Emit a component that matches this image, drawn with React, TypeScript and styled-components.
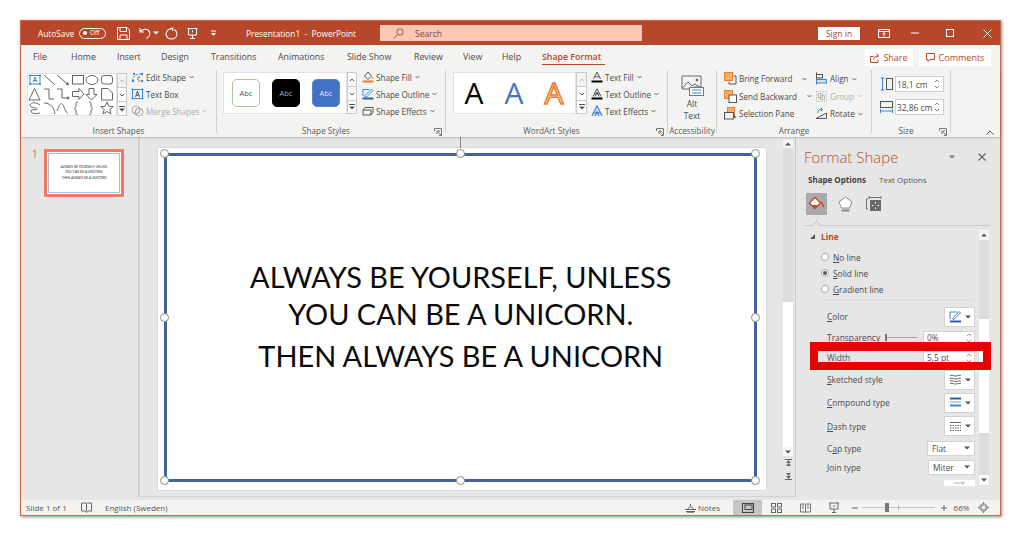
import React from "react";
import styled, { createGlobalStyle } from "styled-components";

const ACCENT = "#b7472a";
const INK = "#4a4a4a";
const BLUE = "#3f86cf";
const ORANGE = "#ed7d31";

const Global = createGlobalStyle`
  html, body { margin: 0; padding: 0; background: #fff; }
  body { font-family: "Open Sans", "Liberation Sans", sans-serif; }
  * { box-sizing: border-box; }
  svg { display: block; flex: none; }
`;

const Page = styled.div`
  width: 1024px;
  height: 538px;
  padding: 20px 0 0 20px;
  overflow: hidden;
`;
const Win = styled.div`
  width: 981px;
  height: 496px;
  border: 1px solid #c9674d;
  box-shadow: 1px 1px 3px rgba(0, 0, 0, 0.45);
  display: flex;
  flex-direction: column;
  background: #e6e6e6;
  position: relative;
`;

/* ---------- title bar ---------- */
const TitleBar = styled.div`
  height: 24px;
  flex: none;
  background: ${ACCENT};
  color: #fff;
  display: flex;
  align-items: center;
  padding-left: 17px;
  font-size: 8.3px;
`;
const Slot = styled.div<{ $w: number; $ml?: number }>`
  width: ${(p) => p.$w}px;
  margin-left: ${(p) => p.$ml ?? 0}px;
  flex: none;
  display: flex;
  align-items: center;
  white-space: nowrap;
`;
const Toggle = styled.div`
  width: 27px;
  height: 11px;
  border: 1px solid #fff;
  border-radius: 6px;
  display: flex;
  align-items: center;
  padding-left: 3px;
  gap: 3px;
  font-size: 6.5px;
  line-height: 1;
`;
const ToggleDot = styled.span`
  width: 4px;
  height: 4px;
  border-radius: 50%;
  background: #fff;
`;
const Search = styled.div`
  width: 262px;
  height: 16px;
  margin-left: 26px;
  flex: none;
  background: #fdc7b3;
  color: #7a4a3a;
  display: flex;
  align-items: center;
  padding-left: 13px;
  gap: 11px;
  font-size: 8.5px;
`;
const SignIn = styled.div`
  width: 42px;
  height: 13px;
  margin-left: 176px;
  flex: none;
  background: #fff;
  color: ${ACCENT};
  font-size: 8.5px;
  display: flex;
  align-items: center;
  justify-content: center;
`;

/* ---------- tabs ---------- */
const TabsRow = styled.div`
  height: 25px;
  flex: none;
  background: #f3f3f2;
  display: flex;
  align-items: center;
  padding: 0 9px 0 12px;
  font-size: 8.8px;
  color: ${INK};
`;
const Tab = styled.div<{ $w: number; $active?: boolean }>`
  width: ${(p) => p.$w}px;
  flex: none;
  white-space: nowrap;
  height: 25px;
  line-height: 24px;
  position: relative;
  color: ${(p) => (p.$active ? ACCENT : INK)};
  font-weight: ${(p) => (p.$active ? 600 : 400)};
  ${(p) =>
    p.$active &&
    `&::after { content: ""; position: absolute; left: 0; bottom: 5px; width: 63px; height: 1.5px; background: ${ACCENT}; }`}
`;
const TopAction = styled.div<{ $w: number; $ml?: string }>`
  width: ${(p) => p.$w}px;
  margin-left: ${(p) => p.$ml ?? "0"};
  height: 17px;
  flex: none;
  background: #fff;
  color: ${ACCENT};
  font-size: 9px;
  display: flex;
  align-items: center;
  justify-content: center;
  gap: 4px;
`;

/* ---------- ribbon ---------- */
const Ribbon = styled.div`
  height: 67px;
  flex: none;
  background: #f3f3f2;
  display: flex;
  align-items: flex-start;
  position: relative;
  box-shadow: 0 1px 2px rgba(0, 0, 0, 0.2);
  z-index: 2;
  color: ${INK};
  font-size: 8.1px;
`;
const Group = styled.div<{ $w: number; $noEdge?: boolean }>`
  width: ${(p) => p.$w}px;
  height: 63px;
  flex: none;
  border-right: 1px solid ${(p) => (p.$noEdge ? "transparent" : "#cfcfcf")};
  display: flex;
  flex-direction: column;
  position: relative;
`;
const GroupBody = styled.div<{ $pl?: number }>`
  height: 55px;
  flex: none;
  display: flex;
  align-items: flex-start;
  padding-left: ${(p) => p.$pl ?? 0}px;
`;
const GroupLabel = styled.div<{ $launcher?: boolean }>`
  height: 12px;
  line-height: 12px;
  flex: none;
  text-align: center;
  font-size: 8.2px;
  color: #5a5a5a;
  white-space: nowrap;
  padding-right: ${(p) => (p.$launcher ? 10 : 0)}px;
`;
const Launcher = styled.div`
  position: absolute;
  right: 3px;
  bottom: -3px;
`;
const Collapse = styled.div`
  position: absolute;
  right: 6px;
  bottom: 2px;
`;
const Gallery = styled.div<{ $w: number; $h: number; $mt: number }>`
  width: ${(p) => p.$w}px;
  height: ${(p) => p.$h}px;
  margin-top: ${(p) => p.$mt}px;
  flex: none;
  background: #fff;
  border: 1px solid #e2e2e2;
  display: flex;
  align-items: center;
  position: relative;
`;
const ScrollStack = styled.div<{ $w: number; $mt: number }>`
  width: ${(p) => p.$w}px;
  margin-top: ${(p) => p.$mt}px;
  flex: none;
  display: flex;
  flex-direction: column;
`;
const ScrollBtn = styled.div<{ $h: number; $faded?: boolean }>`
  height: ${(p) => p.$h}px;
  border: 1px solid #c9c9c9;
  margin-top: -1px;
  background: ${(p) => (p.$faded ? "#f3f3f2" : "#fdfdfd")};
  display: flex;
  align-items: center;
  justify-content: center;
  &:first-child { margin-top: 0; }
`;
const Menu = styled.div<{ $ml: number; $w?: number; $gap?: number; $pt?: number }>`
  margin-left: ${(p) => p.$ml}px;
  ${(p) => (p.$w ? `width: ${p.$w}px;` : "")}
  flex: none;
  display: flex;
  flex-direction: column;
  gap: ${(p) => p.$gap ?? 3}px;
  padding-top: ${(p) => p.$pt ?? 0}px;
`;
const MenuItem = styled.div<{ $off?: boolean; $h?: number }>`
  height: ${(p) => p.$h ?? 14}px;
  display: flex;
  align-items: center;
  gap: 2px;
  white-space: nowrap;
  color: ${(p) => (p.$off ? "#aeaeae" : INK)};
`;
const CaretBox = styled.span<{ $ml?: number }>`
  margin-left: ${(p) => p.$ml ?? 1}px;
`;
const Swatch = styled.div<{ $bg: string; $line: string; $fg: string; $ml: number }>`
  width: 28px;
  height: 28px;
  margin-left: ${(p) => p.$ml}px;
  flex: none;
  border-radius: 5px;
  background: ${(p) => p.$bg};
  border: 1.5px solid ${(p) => p.$line};
  color: ${(p) => p.$fg};
  font-size: 7.5px;
  display: flex;
  align-items: center;
  justify-content: center;
`;
const BigA = styled.div<{ $ml: number; $color: string; $stroke?: string }>`
  width: 20px;
  margin-left: ${(p) => p.$ml}px;
  flex: none;
  text-align: center;
  font-size: 30px;
  line-height: 1;
  color: ${(p) => p.$color};
  ${(p) => (p.$stroke ? `-webkit-text-stroke: 1.5px ${p.$stroke};` : "")}
`;
const AltColumn = styled.div`
  width: 100%;
  display: flex;
  flex-direction: column;
  align-items: center;
  padding-top: 5px;
  font-size: 8.4px;
  line-height: 12px;
`;
const AltLabel = styled.div`
  margin-top: 2px;
  text-align: center;
`;
const SizeColumn = styled.div`
  padding-top: 6px;
  display: flex;
  flex-direction: column;
  gap: 7px;
`;
const SizeRow = styled.div`
  display: flex;
  align-items: center;
  gap: 2px;
`;
const SizeInput = styled.div`
  width: 49px;
  height: 16px;
  background: #fff;
  border: 1px solid #cfcfcf;
  padding-left: 1px;
  font-size: 8.4px;
  display: flex;
  align-items: center;
  justify-content: space-between;
  padding-right: 3px;
`;
const Spin = styled.div`
  display: flex;
  flex-direction: column;
  gap: 2px;
`;

/* ---------- body ---------- */
const Body = styled.div`
  flex: 1;
  min-height: 0;
  display: flex;
`;
const Thumbs = styled.div`
  width: 118px;
  flex: none;
  border-right: 1px solid #c9c9c9;
  height: 360px;
  display: flex;
  align-items: flex-start;
  padding: 12px 0 0 11px;
`;
const ThumbNum = styled.div`
  width: 12px;
  font-size: 10px;
  line-height: 11px;
  color: #d9674e;
`;
const Thumb = styled.div`
  width: 80px;
  height: 48px;
  flex: none;
  border: 3px solid #ef7d64;
  background: #fff;
  padding: 1px;
`;
const ThumbInner = styled.div`
  height: 100%;
  border: 1px solid #a9bddb;
  display: flex;
  flex-direction: column;
  justify-content: center;
  align-items: center;
  gap: 2.4px;
  font-size: 3.2px;
  line-height: 3.2px;
  color: #333;
  white-space: nowrap;
  font-family: Lato, sans-serif;
`;
const Editor = styled.div`
  width: 656px;
  height: 360px;
  flex: none;
  border-left: 1px solid #d6d6d6;
  border-bottom: 1px solid #d2d2d2;
  display: flex;
  align-items: flex-start;
  padding: 11px 0 0 18px;
`;
const Slide = styled.div`
  width: 608px;
  height: 342px;
  flex: none;
  background: #fff;
  box-shadow: 0 0 0 1px #dadada;
  padding: 4.5px 9px 8.5px 5.5px;
  position: relative;
`;
const RotLine = styled.div`
  position: absolute;
  left: 302px;
  top: -11px;
  width: 1px;
  height: 11px;
  background: #8a8a8a;
`;
const Shape = styled.div`
  width: 100%;
  height: 100%;
  border: 3.5px solid #44629c;
  display: flex;
  flex-direction: column;
  align-items: center;
  justify-content: center;
  position: relative;
  padding: 0 0 2px 1px;
  color: #0a0a0a;
  font-family: Lato, "Open Sans", sans-serif;
  font-size: 28.9px;
  line-height: 37px;
  white-space: nowrap;
`;
const ShapeLine = styled.div<{ $mt?: number }>`
  margin-top: ${(p) => p.$mt ?? 0}px;
`;
const HandleLayer = styled.div`
  position: absolute;
  inset: -1.75px;
`;
const Handle = styled.div<{ $l: number; $t: number }>`
  position: absolute;
  left: ${(p) => p.$l}%;
  top: ${(p) => p.$t}%;
  width: 9px;
  height: 9px;
  margin: -4.5px 0 0 -4.5px;
  background: #fff;
  border: 1.3px solid #8c8c8c;
  border-radius: 50%;
`;
const VScroll = styled.div`
  width: 10px;
  margin: -8px 0 0 17px;
  flex: none;
  display: flex;
  flex-direction: column;
  height: 342px;
`;
const VBtn = styled.div<{ $h: number }>`
  height: ${(p) => p.$h}px;
  flex: none;
  background: #f7f7f7;
  display: flex;
  align-items: center;
  justify-content: center;
`;
const VTrack = styled.div<{ $thumb: number; $align: string; $pad?: number }>`
  flex: 1;
  min-height: 0;
  background: #dcdcdc;
  display: flex;
  flex-direction: column;
  justify-content: ${(p) => p.$align};
  padding-top: ${(p) => p.$pad ?? 0}px;
  &::before {
    content: "";
    display: block;
    height: ${(p) => p.$thumb}px;
    background: #fff;
  }
`;
const NavBtn = styled.div`
  height: 12px;
  flex: none;
  margin-top: 1px;
  display: flex;
  align-items: center;
  justify-content: center;
`;

/* ---------- format pane ---------- */
const Pane = styled.div`
  width: 205px;
  flex: none;
  height: 360px;
  border-left: 1px solid #c9c9c9;
  padding-left: 8px;
  color: ${INK};
  font-size: 8.4px;
`;
const PaneHead = styled.div`
  height: 20px;
  margin-top: 10px;
  display: flex;
  align-items: center;
`;
const PaneTitle = styled.div`
  width: 145px;
  font-size: 15px;
  font-weight: 300;
  color: #c2492c;
  white-space: nowrap;
`;
const PaneClose = styled.div`
  margin-left: 23px;
`;
const PaneTabs = styled.div`
  height: 14px;
  margin-top: 6px;
  padding-left: 4px;
  display: flex;
  align-items: center;
  line-height: 14px;
  font-size: 8px;
`;
const PaneTab = styled.div<{ $bold?: boolean; $w: number }>`
  width: ${(p) => p.$w}px;
  font-weight: ${(p) => (p.$bold ? 700 : 400)};
  color: ${(p) => (p.$bold ? "#3f3f3f" : "#555")};
  white-space: nowrap;
`;
const PaneIcons = styled.div`
  margin-top: 6px;
  height: 22px;
  padding-left: 2px;
  display: flex;
  align-items: center;
`;
const PaneIconBox = styled.div<{ $on?: boolean; $w: number; $ml?: number }>`
  width: ${(p) => p.$w}px;
  margin-left: ${(p) => p.$ml ?? 0}px;
  height: 22px;
  background: ${(p) => (p.$on ? "#a9a9a9" : "transparent")};
  display: flex;
  align-items: center;
  justify-content: center;
`;
const PaneRule = styled.div`
  width: 186px;
  height: 1px;
  margin-top: 10px;
  background: #c9c9c9;
  position: relative;
  &::after {
    content: "";
    position: absolute;
    left: 9px;
    top: -3px;
    width: 6px;
    height: 6px;
    background: #e6e6e6;
    border-left: 1px solid #c9c9c9;
    border-top: 1px solid #c9c9c9;
    transform: rotate(45deg);
  }
`;
const PaneScrollArea = styled.div`
  margin-top: 4px;
  height: 255px;
  display: flex;
`;
const PaneMain = styled.div`
  width: 175px;
  flex: none;
`;
const SectionHead = styled.div`
  height: 12px;
  padding-left: 6px;
  display: flex;
  align-items: center;
  gap: 6px;
  font-weight: 700;
  color: ${ACCENT};
`;
const RadioList = styled.div`
  margin-top: 7px;
  padding-left: 17px;
  display: flex;
  flex-direction: column;
`;
const RadioRow = styled.div`
  height: 16px;
  display: flex;
  align-items: center;
  gap: 4px;
`;
const RadioDot = styled.span<{ $on?: boolean }>`
  width: 8px;
  height: 8px;
  border-radius: 50%;
  background: #fff;
  border: 1px solid #a8a8a8;
  display: flex;
  align-items: center;
  justify-content: center;
  &::after {
    content: "";
    width: 4px;
    height: 4px;
    border-radius: 50%;
    background: ${(p) => (p.$on ? "#555" : "transparent")};
  }
`;
const ThinRule = styled.div`
  margin: 2px 4px 6px 16px;
  height: 1px;
  background: #dcdcdc;
`;
const PropRow = styled.div<{ $h: number }>`
  height: ${(p) => p.$h}px;
  padding: 0 4px 0 23px;
  display: flex;
  align-items: center;
  justify-content: space-between;
  position: relative;
`;
const DropBtn = styled.div`
  width: 31px;
  height: 20px;
  background: #fff;
  border: 1px solid #d2d2d2;
  display: flex;
  align-items: center;
  justify-content: center;
  gap: 3px;
`;
const SelectBox = styled.div<{ $w: number }>`
  width: ${(p) => p.$w}px;
  height: 15px;
  background: #fff;
  border: 1px solid #d2d2d2;
  display: flex;
  align-items: center;
  justify-content: space-between;
  padding: 0 4px 0 4px;
`;
const NumInput = styled.div<{ $peach?: boolean }>`
  width: 52px;
  height: 14px;
  background: #fff;
  border: 1px solid ${(p) => (p.$peach ? "#f5cdbd" : "#d2d2d2")};
  display: flex;
  align-items: center;
  justify-content: space-between;
  padding: 0 2px 0 3px;
`;
const SliderWrap = styled.div`
  display: flex;
  align-items: center;
  gap: 5px;
`;
const MiniSlider = styled.div`
  width: 33px;
  height: 1px;
  background: #a8a8a8;
  position: relative;
  &::before {
    content: "";
    position: absolute;
    left: 0;
    top: -3px;
    width: 1.5px;
    height: 7px;
    background: #777;
  }
`;
const Callout = styled.div`
  position: absolute;
  left: 6px;
  right: -12px;
  top: -6px;
  bottom: -3px;
  border-style: solid;
  border-color: #e60000;
  border-width: 9px 8px 8px 8px;
  z-index: 5;
`;
const PartialBtn = styled.div`
  width: 31px;
  height: 6px;
  margin: 3px 0 0 140px;
  background: #fff;
  display: flex;
  justify-content: center;
  overflow: hidden;
`;
const PaneVScroll = styled.div`
  width: 10px;
  flex: none;
  display: flex;
  flex-direction: column;
`;

/* ---------- status bar ---------- */
const StatusBar = styled.div`
  height: 15px;
  flex: none;
  background: #f3f3f2;
  display: flex;
  align-items: center;
  padding-left: 5px;
  color: #555;
  font-size: 8px;
`;
const StatusRight = styled.div`
  margin-left: auto;
  display: flex;
  align-items: center;
  height: 15px;
  padding-right: 4px;
`;
const StatusSlot = styled.div<{ $w: number; $on?: boolean; $start?: boolean }>`
  width: ${(p) => p.$w}px;
  height: 15px;
  flex: none;
  display: flex;
  align-items: center;
  justify-content: ${(p) => (p.$start ? "flex-start" : "center")};
  gap: 2px;
  background: ${(p) => (p.$on ? "#c6c6c6" : "transparent")};
`;
const ZoomTrack = styled.div`
  width: 73px;
  height: 1px;
  flex: none;
  background: #c4c4c4;
  position: relative;
`;
const ZoomThumb = styled.div`
  position: absolute;
  left: 23px;
  top: -4px;
  width: 4px;
  height: 9px;
  background: #777;
`;
const ZoomTick = styled.div`
  position: absolute;
  left: 36px;
  top: -2px;
  width: 1px;
  height: 5px;
  background: #b4b4b4;
`;

/* ---------- drawings ---------- */
type IP = { w?: number; h?: number; vb?: string; c?: string; sw?: number; children?: React.ReactNode };
const Ic = ({ w = 12, h = 12, vb, c = "currentColor", sw = 1, children }: IP) => (
  <svg width={w} height={h} viewBox={vb ?? `0 0 ${w} ${h}`} fill="none" stroke={c} strokeWidth={sw}>
    {children}
  </svg>
);
const Caret = ({ c = "#666" }: { c?: string }) => (
  <Ic w={5} h={4} c={c}><path d="M.5 1 2.500 3 4.500 1" /></Ic>
);
const Solid = ({ dir = "down", c = "#555" }: { dir?: "up" | "down"; c?: string }) => (
  <svg width="6" height="4" viewBox="0 0 6 4"><path d={dir === "down" ? "M0 .5h6L3 3.500z" : "M0 3.500h6L3 .5z"} fill={c} /></svg>
);
const Chev = ({ dir, c = "#555" }: { dir: "up" | "down"; c?: string }) => (
  <Ic w={6} h={4} c={c}><path d={dir === "down" ? "M.8 .8 3 3 5.200 .8" : "M.8 3.200 3 1 5.200 3.200"} /></Ic>
);
const More = () => (
  <svg width="6" height="6" viewBox="0 0 6 6"><path d="M0 .5h6" stroke="#555" /><path d="M0 2.500h6L3 5.500z" fill="#555" /></svg>
);
const LauncherIcon = () => (
  <Ic w={8} h={8} c="#777"><path d="M.5 3V.5H7.500V7.500H5M7 7 3.500 3.500M3 6V3H6" /></Ic>
);

const ShapesArt = () => (
  <Ic w={87} h={41} vb="1 1 87 41" c="#666">
    <rect x="3" y="2.500" width="10" height="8.500" stroke={BLUE} />
    <path d="M6 9 8 4l2 5M6.700 7.500h2.600" stroke={BLUE} />
    <g fill={BLUE} stroke="none"><circle cx="3" cy="2.500" r="1" /><circle cx="13" cy="2.500" r="1" /><circle cx="3" cy="11" r="1" /><circle cx="13" cy="11" r="1" /></g>
    <path d="M17 2 28 12M30 2l11 9.500" /><path d="m39 11 2.500 1-1-2.500z" fill="#555" />
    <rect x="45.500" y="2.500" width="11" height="8.500" /><ellipse cx="65" cy="7" rx="6" ry="4.500" /><rect x="74.500" y="2.500" width="11" height="8.500" rx="2.500" />
    <path d="M2 27 7.500 15.500 13 27zM17 16h5v10h5M30 16h5v9h5" /><circle cx="41" cy="25" r="1" fill="#555" />
    <path d="M45.500 18.500h6.500V15.500l5 5.500-5 5.500v-3h-6.500zM62 15.500h5v6h3l-5.500 5.500L59 21.500h3zM74.500 27V15.500H81l4.500 4.500V27z" />
    <path d="M13 32c-4-3-9-3-10 0s7 2 7 4-6-1-6 2 5 3 9 2M17 30c6 0 10 4 11 11M30 38c3-9 5-9 7-4s3 6 4 7" />
    <path d="M51 29c-2 0-2 1-2 3s0 3-2 3.500c2 .5 2 1.500 2 3.500s0 3 2 3M62 29c2 0 2 1 2 3s0 3 2 3.500c-2 .5-2 1.500-2 3.500s0 3-2 3" />
    <path d="M80 29l1.800 4.300 4.500.3-3.500 2.900 1.200 4.500-4-2.500-4 2.500 1.200-4.500-3.500-2.900 4.500-.3z" />
  </Ic>
);

const handles: [number, number][] = [[0, 0], [50, 0], [100, 0], [0, 50], [100, 50], [0, 100], [50, 100], [100, 100]];
const U = ({ children }: { children: React.ReactNode }) => <u>{children}</u>;

export default function App() {
  return (
    <Page>
      <Global />
      <Win>
        <TitleBar>
          <Slot $w={41}>AutoSave</Slot>
          <Toggle><ToggleDot />Off</Toggle>
          <Slot $w={13} $ml={11}>
            <Ic w={13} h={13}><path d="M.5.500h9.500l2.500 2.500v9.500H.5z" /><path d="M3 .5v4h6.500v-4M3 12.500V8h7v4.500" /></Ic>
          </Slot>
          <Slot $w={17} $ml={9}>
            <Ic w={12} h={12} sw={1.100}><path d="M1 1v4h4M1.300 5C3 1.500 9 1 10.500 5c1 3-1 5.500-3.500 6.500" /></Ic>
            <CaretBox $ml={2}><Solid c="#fff" /></CaretBox>
          </Slot>
          <Slot $w={13} $ml={9}>
            <Ic w={13} h={13} sw={1.100}><path d="M5 1.500 8 1.200 7.500 4M7.500 1.500C3 1.500 1 4.500 1 7c0 3 2.500 5 5.500 5s5.500-2 5.500-5c0-2-1-3.500-2.500-4.500" /></Ic>
          </Slot>
          <Slot $w={11} $ml={9}>
            <Ic w={11} h={13}><path d="M.5 1.500h10M1.500 1.500v6.500h8V1.500M5.500 8v3M3 11.500h5M5.500 3.500v2" /></Ic>
          </Slot>
          <Slot $w={7} $ml={12}>
            <svg width="7" height="7" viewBox="0 0 7 7"><path d="M1 1h5" stroke="#fff" /><path d="M1 3h5L3.500 6z" fill="#fff" /></svg>
          </Slot>
          <Slot $w={108} $ml={29}>Presentation1&nbsp; -&nbsp; PowerPoint</Slot>
          <Search>
            <Ic w={11} h={11} c="#8a5a48"><circle cx="7" cy="4" r="3.200" /><path d="M4.800 6.300 1 10.300" /></Ic>
            Search
          </Search>
          <SignIn>Sign in</SignIn>
          <Slot $w={13} $ml={18}>
            <Ic w={12} h={9}><path d="M.5.500h11v8H.5z" /><path d="M.5 2.500h11" /><path d="M6 7.500V3.800M4.300 5.300 6 3.600 7.700 5.300" /></Ic>
          </Slot>
          <Slot $w={8} $ml={20}><Ic w={8} h={2}><path d="M0 1h8" /></Ic></Slot>
          <Slot $w={8} $ml={27}><Ic w={8} h={8}><rect x=".5" y=".5" width="7" height="7" /></Ic></Slot>
          <Slot $w={9} $ml={29}><Ic w={9} h={9}><path d="M.5.500l8 8M8.500.500l-8 8" /></Ic></Slot>
        </TitleBar>

        <TabsRow>
          <Tab $w={38}>File</Tab>
          <Tab $w={46}>Home</Tab>
          <Tab $w={44}>Insert</Tab>
          <Tab $w={50}>Design</Tab>
          <Tab $w={67}>Transitions</Tab>
          <Tab $w={69}>Animations</Tab>
          <Tab $w={67}>Slide Show</Tab>
          <Tab $w={49}>Review</Tab>
          <Tab $w={39}>View</Tab>
          <Tab $w={40}>Help</Tab>
          <Tab $w={63} $active>Shape Format</Tab>
          <TopAction $w={48} $ml="auto">
            <Ic w={9} h={10}><path d="M.5 3.500h3M.5 3.500v6h7.500v-3M3.500 6.500C4 4 5.500 3 8 3M6.500.5 8.500 3 6.500 5" /></Ic>
            Share
          </TopAction>
          <TopAction $w={72} $ml="6px">
            <Ic w={9} h={9}><path d="M.5.500h8v6H4L2 8.500v-2H.5z" /></Ic>
            Comments
          </TopAction>
        </TabsRow>

        <Ribbon>
          <Group $w={196}>
            <GroupBody $pl={6}>
              <Gallery $w={90} $h={43} $mt={3}><ShapesArt /></Gallery>
              <ScrollStack $w={10} $mt={3}>
                <ScrollBtn $h={15} $faded><Chev dir="up" c="#bbb" /></ScrollBtn>
                <ScrollBtn $h={15}><Chev dir="down" /></ScrollBtn>
                <ScrollBtn $h={15}><More /></ScrollBtn>
              </ScrollStack>
              <Menu $ml={4}>
                <MenuItem>
                  <Ic w={13} h={12} c="#555"><path d="M2 10c0-5 2-7 9-7" strokeDasharray="2 1.500" stroke={BLUE} /><path d="M9 6c-2 0-3 1-2 2.500s2 .5 1 2" /><g fill={BLUE} stroke="none"><circle cx="2" cy="10" r="1.200" /><circle cx="11" cy="3" r="1.200" /><circle cx="11" cy="10" r="1.200" /><circle cx="3" cy="3" r="1.200" /></g></Ic>
                  Edit Shape<CaretBox><Caret /></CaretBox>
                </MenuItem>
                <MenuItem>
                  <Ic w={13} h={12} c={BLUE}><rect x="1.500" y="1.500" width="10" height="9" /><path d="M4.500 9 6.500 3l2 6M5.200 7.300h2.600" stroke="#555" /><g fill={BLUE} stroke="none"><circle cx="1.500" cy="1.500" r="1" /><circle cx="11.500" cy="1.500" r="1" /><circle cx="1.500" cy="10.500" r="1" /><circle cx="11.500" cy="10.500" r="1" /></g></Ic>
                  Text Box
                </MenuItem>
                <MenuItem $off>
                  <Ic w={13} h={12} c="#aeaeae"><circle cx="5" cy="5" r="4" /><circle cx="8" cy="7" r="4" /><path d="M3 8l5-6M5 10l5-6" /></Ic>
                  Merge Shapes<CaretBox><Caret c="#bbb" /></CaretBox>
                </MenuItem>
              </Menu>
            </GroupBody>
            <GroupLabel>Insert Shapes</GroupLabel>
          </Group>

          <Group $w={229}>
            <GroupBody $pl={6}>
              <Gallery $w={124} $h={42} $mt={2}>
                <Swatch $bg="#fff" $line="#a9c98f" $fg="#44546a" $ml={8}>Abc</Swatch>
                <Swatch $bg="#000" $line="#000" $fg="#9fb0d0" $ml={12}>Abc</Swatch>
                <Swatch $bg="#4472c4" $line="#5b84cf" $fg="#dfe8f6" $ml={12}>Abc</Swatch>
              </Gallery>
              <ScrollStack $w={10} $mt={2}>
                <ScrollBtn $h={15}><Chev dir="up" /></ScrollBtn>
                <ScrollBtn $h={15}><Chev dir="down" /></ScrollBtn>
                <ScrollBtn $h={14}><More /></ScrollBtn>
              </ScrollStack>
              <Menu $ml={5}>
                <MenuItem>
                  <Ic w={12} h={12} c="#555"><path d="M6 1 2.500 5 6 8.500 9.500 5z" /><path d="M10.500 6.500v1" /><path d="M.5 10.500h11" stroke={ORANGE} strokeWidth={2} /></Ic>
                  Shape Fill<CaretBox><Caret /></CaretBox>
                </MenuItem>
                <MenuItem>
                  <Ic w={12} h={12} c="#555"><path d="M1 8V1.500h6M3 7.500 9.500 1l1.500 1.500L4.500 9H3z" stroke={BLUE} /><path d="M.5 10.500h11" stroke="#2f5fa8" strokeWidth={2} /></Ic>
                  Shape Outline<CaretBox><Caret /></CaretBox>
                </MenuItem>
                <MenuItem>
                  <Ic w={12} h={12} c="#555"><path d="M3 2.500h8v5l-2 2.500H1V5z" /><path d="M1 5h8v5" /></Ic>
                  Shape Effects<CaretBox><Caret /></CaretBox>
                </MenuItem>
              </Menu>
            </GroupBody>
            <GroupLabel $launcher>Shape Styles</GroupLabel>
            <Launcher><LauncherIcon /></Launcher>
          </Group>

          <Group $w={222}>
            <GroupBody $pl={7}>
              <Gallery $w={123} $h={42} $mt={2}>
                <BigA $ml={10} $color="#000">A</BigA>
                <BigA $ml={20} $color="#4472c4">A</BigA>
                <BigA $ml={20} $color="#fbe5d6" $stroke={ORANGE}>A</BigA>
              </Gallery>
              <ScrollStack $w={11} $mt={2}>
                <ScrollBtn $h={15} $faded><Chev dir="up" c="#bbb" /></ScrollBtn>
                <ScrollBtn $h={15}><Chev dir="down" /></ScrollBtn>
                <ScrollBtn $h={14}><More /></ScrollBtn>
              </ScrollStack>
              <Menu $ml={4}>
                <MenuItem>
                  <Ic w={12} h={12} c="#555"><path d="M2.500 8 6 1l3.500 7M3.800 5.800h4.400" /><path d="M.5 10.500h11" stroke="#000" strokeWidth={2} /></Ic>
                  Text Fill<CaretBox><Caret /></CaretBox>
                </MenuItem>
                <MenuItem>
                  <Ic w={12} h={12} c="#555"><path d="M2 8.500 6 .8l4 7.700M3.800 6h4.400M4 8.500 6 4l2 4.500" /><path d="M.5 10.500h11" stroke="#000" strokeWidth={2} /></Ic>
                  Text Outline<CaretBox><Caret /></CaretBox>
                </MenuItem>
                <MenuItem>
                  <Ic w={12} h={12} c={BLUE} sw={1.300}><path d="M1 11 6 1l5 10M3.500 8h5M4 11 6 6.500 8 11" /></Ic>
                  Text Effects<CaretBox><Caret /></CaretBox>
                </MenuItem>
              </Menu>
            </GroupBody>
            <GroupLabel $launcher>WordArt Styles</GroupLabel>
            <Launcher><LauncherIcon /></Launcher>
          </Group>

          <Group $w={49}>
            <GroupBody>
              <AltColumn>
                <Ic w={23} h={21} c="#666">
                  <path d="M1 1h19v11H13M1 1v13h7" />
                  <path d="M1.500 13 7 7l4 4 3-2 5 3" />
                  <circle cx="16" cy="5" r="1" fill="#555" />
                  <rect x="8.500" y="12.500" width="14" height="8" fill="#fff" stroke={BLUE} />
                  <path d="M11 15h9M11 18h9" stroke={BLUE} />
                </Ic>
                <AltLabel>Alt<br />Text</AltLabel>
              </AltColumn>
            </GroupBody>
            <GroupLabel>Accessibility</GroupLabel>
          </Group>

          <Group $w={155}>
            <GroupBody $pl={7}>
              <Menu $ml={0} $w={91} $gap={0}>
                <MenuItem $h={17}>
                  <Ic w={13} h={13} c="#555"><rect x=".5" y=".5" width="8" height="8" fill="#f6b26b" stroke={ORANGE} /><path d="M9.500 4h2.500v8H5V9.500" /></Ic>
                  Bring Forward<CaretBox $ml={8}><Caret /></CaretBox>
                </MenuItem>
                <MenuItem $h={18}>
                  <Ic w={13} h={13} c="#555"><rect x=".5" y=".5" width="8" height="8" fill="#f6b26b" stroke={ORANGE} /><rect x="5" y="5" width="7.500" height="7.500" fill="#fff" /></Ic>
                  Send Backward<CaretBox $ml={8}><Caret /></CaretBox>
                </MenuItem>
                <MenuItem $h={17}>
                  <Ic w={13} h={13} c="#555"><rect x="3.500" y=".5" width="7" height="7" fill="#f6b26b" stroke={ORANGE} /><rect x=".5" y="5.500" width="9" height="6.500" fill="#f3f3f2" /><path d="M9 6v6l1.500-1.500 2 .5z" fill="#555" stroke="none" /></Ic>
                  Selection Pane
                </MenuItem>
              </Menu>
              <Menu $ml={0} $gap={0}>
                <MenuItem $h={17}>
                  <Ic w={13} h={13} c="#555"><path d="M1.500.5v12" /><rect x="1.500" y="2.500" width="6" height="3.500" /><rect x="1.500" y="7.500" width="10" height="3.500" fill="#cfe2f3" stroke={BLUE} /></Ic>
                  Align<CaretBox><Caret /></CaretBox>
                </MenuItem>
                <MenuItem $off $h={18}>
                  <Ic w={13} h={13} c="#b8b8b8"><rect x="1.500" y="1.500" width="10" height="10" strokeDasharray="1.500 1.500" /><rect x="3.500" y="3.500" width="4" height="4" /><rect x="5.500" y="5.500" width="4" height="4" /></Ic>
                  Group<CaretBox><Caret c="#bbb" /></CaretBox>
                </MenuItem>
                <MenuItem $h={17}>
                  <Ic w={13} h={13} c="#555"><path d="M1 11.500 11.500 6v5.500z" /><path d="M2.500 6C2.500 3.500 4.500 2 7 2.500M5.500.5l2 2-2 2" stroke={BLUE} /></Ic>
                  Rotate<CaretBox><Caret /></CaretBox>
                </MenuItem>
              </Menu>
            </GroupBody>
            <GroupLabel>Arrange</GroupLabel>
          </Group>

          <Group $w={79}>
            <GroupBody $pl={8}>
              <SizeColumn>
                <SizeRow>
                  <Ic w={13} h={14} c="#555"><path d="M2.500 1v12" stroke={BLUE} /><path d="M.5 1h4M.5 13h4" stroke={BLUE} /><rect x="6.500" y="1.500" width="6" height="11" /></Ic>
                  <SizeInput>18,1 cm<Spin><Chev dir="up" c="#888" /><Chev dir="down" c="#888" /></Spin></SizeInput>
                </SizeRow>
                <SizeRow>
                  <Ic w={13} h={14} c="#555"><rect x=".5" y="1.500" width="12" height="6" /><path d="M.5 11h12M.5 9v4M12.500 9v4" stroke={BLUE} /></Ic>
                  <SizeInput>32,86 cm<Spin><Chev dir="up" c="#888" /><Chev dir="down" c="#888" /></Spin></SizeInput>
                </SizeRow>
              </SizeColumn>
            </GroupBody>
            <GroupLabel $launcher>Size</GroupLabel>
            <Launcher><LauncherIcon /></Launcher>
          </Group>

          <Collapse><Ic w={8} h={5} c="#555"><path d="M.5 4.500 4 1l3.500 3.500" /></Ic></Collapse>
        </Ribbon>

        <Body>
          <Thumbs>
            <ThumbNum>1</ThumbNum>
            <Thumb>
              <ThumbInner>
                <span>ALWAYS BE YOURSELF, UNLESS</span>
                <span>YOU CAN BE A UNICORN.</span>
                <span>THEN ALWAYS BE A UNICORN</span>
              </ThumbInner>
            </Thumb>
          </Thumbs>

          <Editor>
            <Slide>
              <RotLine />
              <Shape>
                <ShapeLine>ALWAYS BE YOURSELF, UNLESS</ShapeLine>
                <ShapeLine>YOU CAN BE A UNICORN.</ShapeLine>
                <ShapeLine $mt={5}>THEN ALWAYS BE A UNICORN</ShapeLine>
                <HandleLayer>
                  {handles.map(([l, t]) => (
                    <Handle key={`${l}-${t}`} $l={l} $t={t} />
                  ))}
                </HandleLayer>
              </Shape>
            </Slide>
            <VScroll>
              <VBtn $h={8}><Solid dir="up" /></VBtn>
              <VTrack $thumb={145} $align="flex-end" />
              <VBtn $h={9}><Solid /></VBtn>
              <NavBtn>
                <svg width="7" height="8" viewBox="0 0 7 8"><path d="M0 .5h7" stroke="#666" /><path d="M3.500 1 6 4H1zM3.500 4 6 7H1z" fill="#666" /></svg>
              </NavBtn>
              <NavBtn>
                <svg width="7" height="8" viewBox="0 0 7 8"><path d="M0 7.500h7" stroke="#666" /><path d="M3.500 7 6 4H1zM3.500 4 6 1H1z" fill="#666" /></svg>
              </NavBtn>
            </VScroll>
          </Editor>

          <Pane>
            <PaneHead>
              <PaneTitle>Format Shape</PaneTitle>
              <Solid c="#777" />
              <PaneClose><Ic w={8} h={8} c="#666" sw={1.300}><path d="M.5.500l7 7M7.500.500l-7 7" /></Ic></PaneClose>
            </PaneHead>
            <PaneTabs>
              <PaneTab $bold $w={71}>Shape Options</PaneTab>
              <PaneTab $w={60}>Text Options</PaneTab>
            </PaneTabs>
            <PaneIcons>
              <PaneIconBox $on $w={21}>
                <svg width="17" height="16" viewBox="0 0 17 16"><path d="M7 1.500 12.500 7 7 12.500 1.500 7z" fill="#fff" stroke="#c8482a" strokeWidth="1.300" /><path d="M3.500 9h7L7 12.500z" fill="#c8482a" /><path d="M12.500 5c2 1 3.500 3.500 3.500 7-1.500-1-2-3-3-4.500z" fill="#c8482a" /></svg>
              </PaneIconBox>
              <PaneIconBox $w={17} $ml={10}>
                <svg width="15" height="16" viewBox="0 0 15 16"><path d="M7.500 1 14 6l-2.500 6h-8L1 6z" fill="#fff" stroke="#8c8c8c" /><path d="M3.500 14.500h8" stroke="#8c8c8c" strokeWidth="2" /></svg>
              </PaneIconBox>
              <PaneIconBox $w={17} $ml={11}>
                <svg width="16" height="16" viewBox="0 0 16 16"><path d="M.5 3v10M0 3h2M0 13h2M3 1.500h12M3 0v3M15 0v3" stroke="#777" fill="none" /><rect x="4" y="4" width="11" height="11" fill="#6a6a6a" /><path d="M9.500 6v1.500M9.500 11.500V13M6 9.500h1.500M11.500 9.500H13" stroke="#fff" /></svg>
              </PaneIconBox>
            </PaneIcons>
            <PaneRule />
            <PaneScrollArea>
              <PaneMain>
                <SectionHead>
                  <svg width="5" height="5" viewBox="0 0 5 5"><path d="M5 0v5H0z" fill="#555" /></svg>
                  Line
                </SectionHead>
                <RadioList>
                  <RadioRow><RadioDot /><span><U>N</U>o line</span></RadioRow>
                  <RadioRow><RadioDot $on /><span><U>S</U>olid line</span></RadioRow>
                  <RadioRow><RadioDot /><span><U>G</U>radient line</span></RadioRow>
                </RadioList>
                <ThinRule />
                <PropRow $h={21}>
                  <span><U>C</U>olor</span>
                  <DropBtn>
                    <Ic w={13} h={13} c="#555"><path d="M1 9V2h7M4 8l6-6.500L11.500 3 5 9.500H4z" stroke={BLUE} /><path d="M1 11.500h11" stroke="#2f5fa8" strokeWidth={2} /></Ic>
                    <Solid />
                  </DropBtn>
                </PropRow>
                <PropRow $h={21}>
                  <span><U>T</U>ransparency</span>
                  <SliderWrap>
                    <MiniSlider />
                    <NumInput>0%<Spin><Chev dir="up" c="#999" /><Chev dir="down" c="#999" /></Spin></NumInput>
                  </SliderWrap>
                </PropRow>
                <PropRow $h={19}>
                  <span><U>W</U>idth</span>
                  <NumInput $peach>5,5 pt<Spin><Chev dir="up" c="#999" /><Chev dir="down" c="#999" /></Spin></NumInput>
                  <Callout />
                </PropRow>
                <PropRow $h={25}>
                  <span><U>S</U>ketched style</span>
                  <DropBtn>
                    <Ic w={13} h={11} c="#666"><path d="M1 1.500c3-1 4 1 6 .5s4-1 5-.5M1 4.500c3-1 4 1 6 .5s4-1 5-.5M1 7c3-1 4 1 6 .5s4-1 5-.5M1 9.500c3-1 4 1 6 .5s4-1 5-.5" /></Ic>
                    <Solid />
                  </DropBtn>
                </PropRow>
                <PropRow $h={21}>
                  <span><U>C</U>ompound type</span>
                  <DropBtn>
                    <Ic w={13} h={11}><path d="M1 1.500h11" stroke="#2f5fa8" strokeWidth={2} /><path d="M1 5h11" stroke="#999" /><path d="M1 8.500h11" stroke={BLUE} strokeWidth={2} /></Ic>
                    <Solid />
                  </DropBtn>
                </PropRow>
                <PropRow $h={26}>
                  <span><U>D</U>ash type</span>
                  <DropBtn>
                    <Ic w={13} h={11} c="#666"><path d="M1 1.500h11" /><path d="M1 4.500h11M1 7h11M1 9.500h11" strokeDasharray="1.500 1" /></Ic>
                    <Solid />
                  </DropBtn>
                </PropRow>
                <PropRow $h={18}>
                  <span>C<U>a</U>p type</span>
                  <SelectBox $w={48}>Flat<Solid /></SelectBox>
                </PropRow>
                <PropRow $h={20}>
                  <span><U>J</U>oin type</span>
                  <SelectBox $w={47}>Miter<Solid /></SelectBox>
                </PropRow>
                <PartialBtn>
                  <Ic w={13} h={6} c="#b0b0b0"><path d="M1 3h10M9.500 1.500 11.500 3 9.500 4.500" /></Ic>
                </PartialBtn>
              </PaneMain>
              <PaneVScroll>
                <VBtn $h={10}><Solid dir="up" /></VBtn>
                <VTrack $thumb={114} $align="flex-start" $pad={79} />
                <VBtn $h={10}><Solid /></VBtn>
              </PaneVScroll>
            </PaneScrollArea>
          </Pane>
        </Body>

        <StatusBar>
          <Slot $w={55}>Slide 1 of 1</Slot>
          <Slot $w={24}>
            <Ic w={11} h={11} c="#666"><path d="M.5 1h4.500l.5.500.5-.5h4.500v8H7L5.500 10.500 4 9H.5zM5.500 1.500V9" /></Ic>
          </Slot>
          <Slot $w={100}>English (Sweden)</Slot>
          <StatusRight>
            <StatusSlot $w={48} $start>
              <Ic w={11} h={10} c="#666"><path d="M0 6.500h11M1 8.500h9M2 9.800h7M3 6.500C3 3 8 3 8 6.500M5.500 1v2" /></Ic>
              Notes
            </StatusSlot>
            <StatusSlot $w={29} $on>
              <Ic w={12} h={10} c="#444"><rect x=".5" y=".5" width="11" height="9" /><rect x="3" y="2" width="7" height="4.500" /></Ic>
            </StatusSlot>
            <StatusSlot $w={29}>
              <Ic w={11} h={10} c="#666"><rect x=".5" y=".5" width="4" height="3.500" /><rect x="6.500" y=".5" width="4" height="3.500" /><rect x=".5" y="6" width="4" height="3.500" /><rect x="6.500" y="6" width="4" height="3.500" /></Ic>
            </StatusSlot>
            <StatusSlot $w={29}>
              <Ic w={11} h={10} c="#777"><path d="M.5 1h4.500l.5.500.5-.5h4.500v8H6l-.5.500L5 9H.5zM5.500 1.500V9M2 3h2M2 5h2M7 3h2M7 5h2" /></Ic>
            </StatusSlot>
            <StatusSlot $w={28}>
              <Ic w={10} h={11} c="#666"><path d="M0 1h10M1 1v6h8V1M5 7v3M3 10.500h4M5 3v2" /></Ic>
            </StatusSlot>
            <StatusSlot $w={14}><Ic w={6} h={2} c="#666"><path d="M0 1h6" /></Ic></StatusSlot>
            <ZoomTrack><ZoomThumb /><ZoomTick /></ZoomTrack>
            <StatusSlot $w={17}><Ic w={6} h={6} c="#666"><path d="M0 3h6M3 0v6" /></Ic></StatusSlot>
            <StatusSlot $w={19}>66%</StatusSlot>
            <StatusSlot $w={25}>
              <Ic w={11} h={11} c="#666"><rect x="3" y="3" width="5" height="5" /><path d="M5.500 0 4 1.800h3zM5.500 11 4 9.200h3zM0 5.500 1.800 4v3zM11 5.500 9.200 4v3z" fill="#666" stroke="none" /></Ic>
            </StatusSlot>
          </StatusRight>
        </StatusBar>
      </Win>
    </Page>
  );
}
